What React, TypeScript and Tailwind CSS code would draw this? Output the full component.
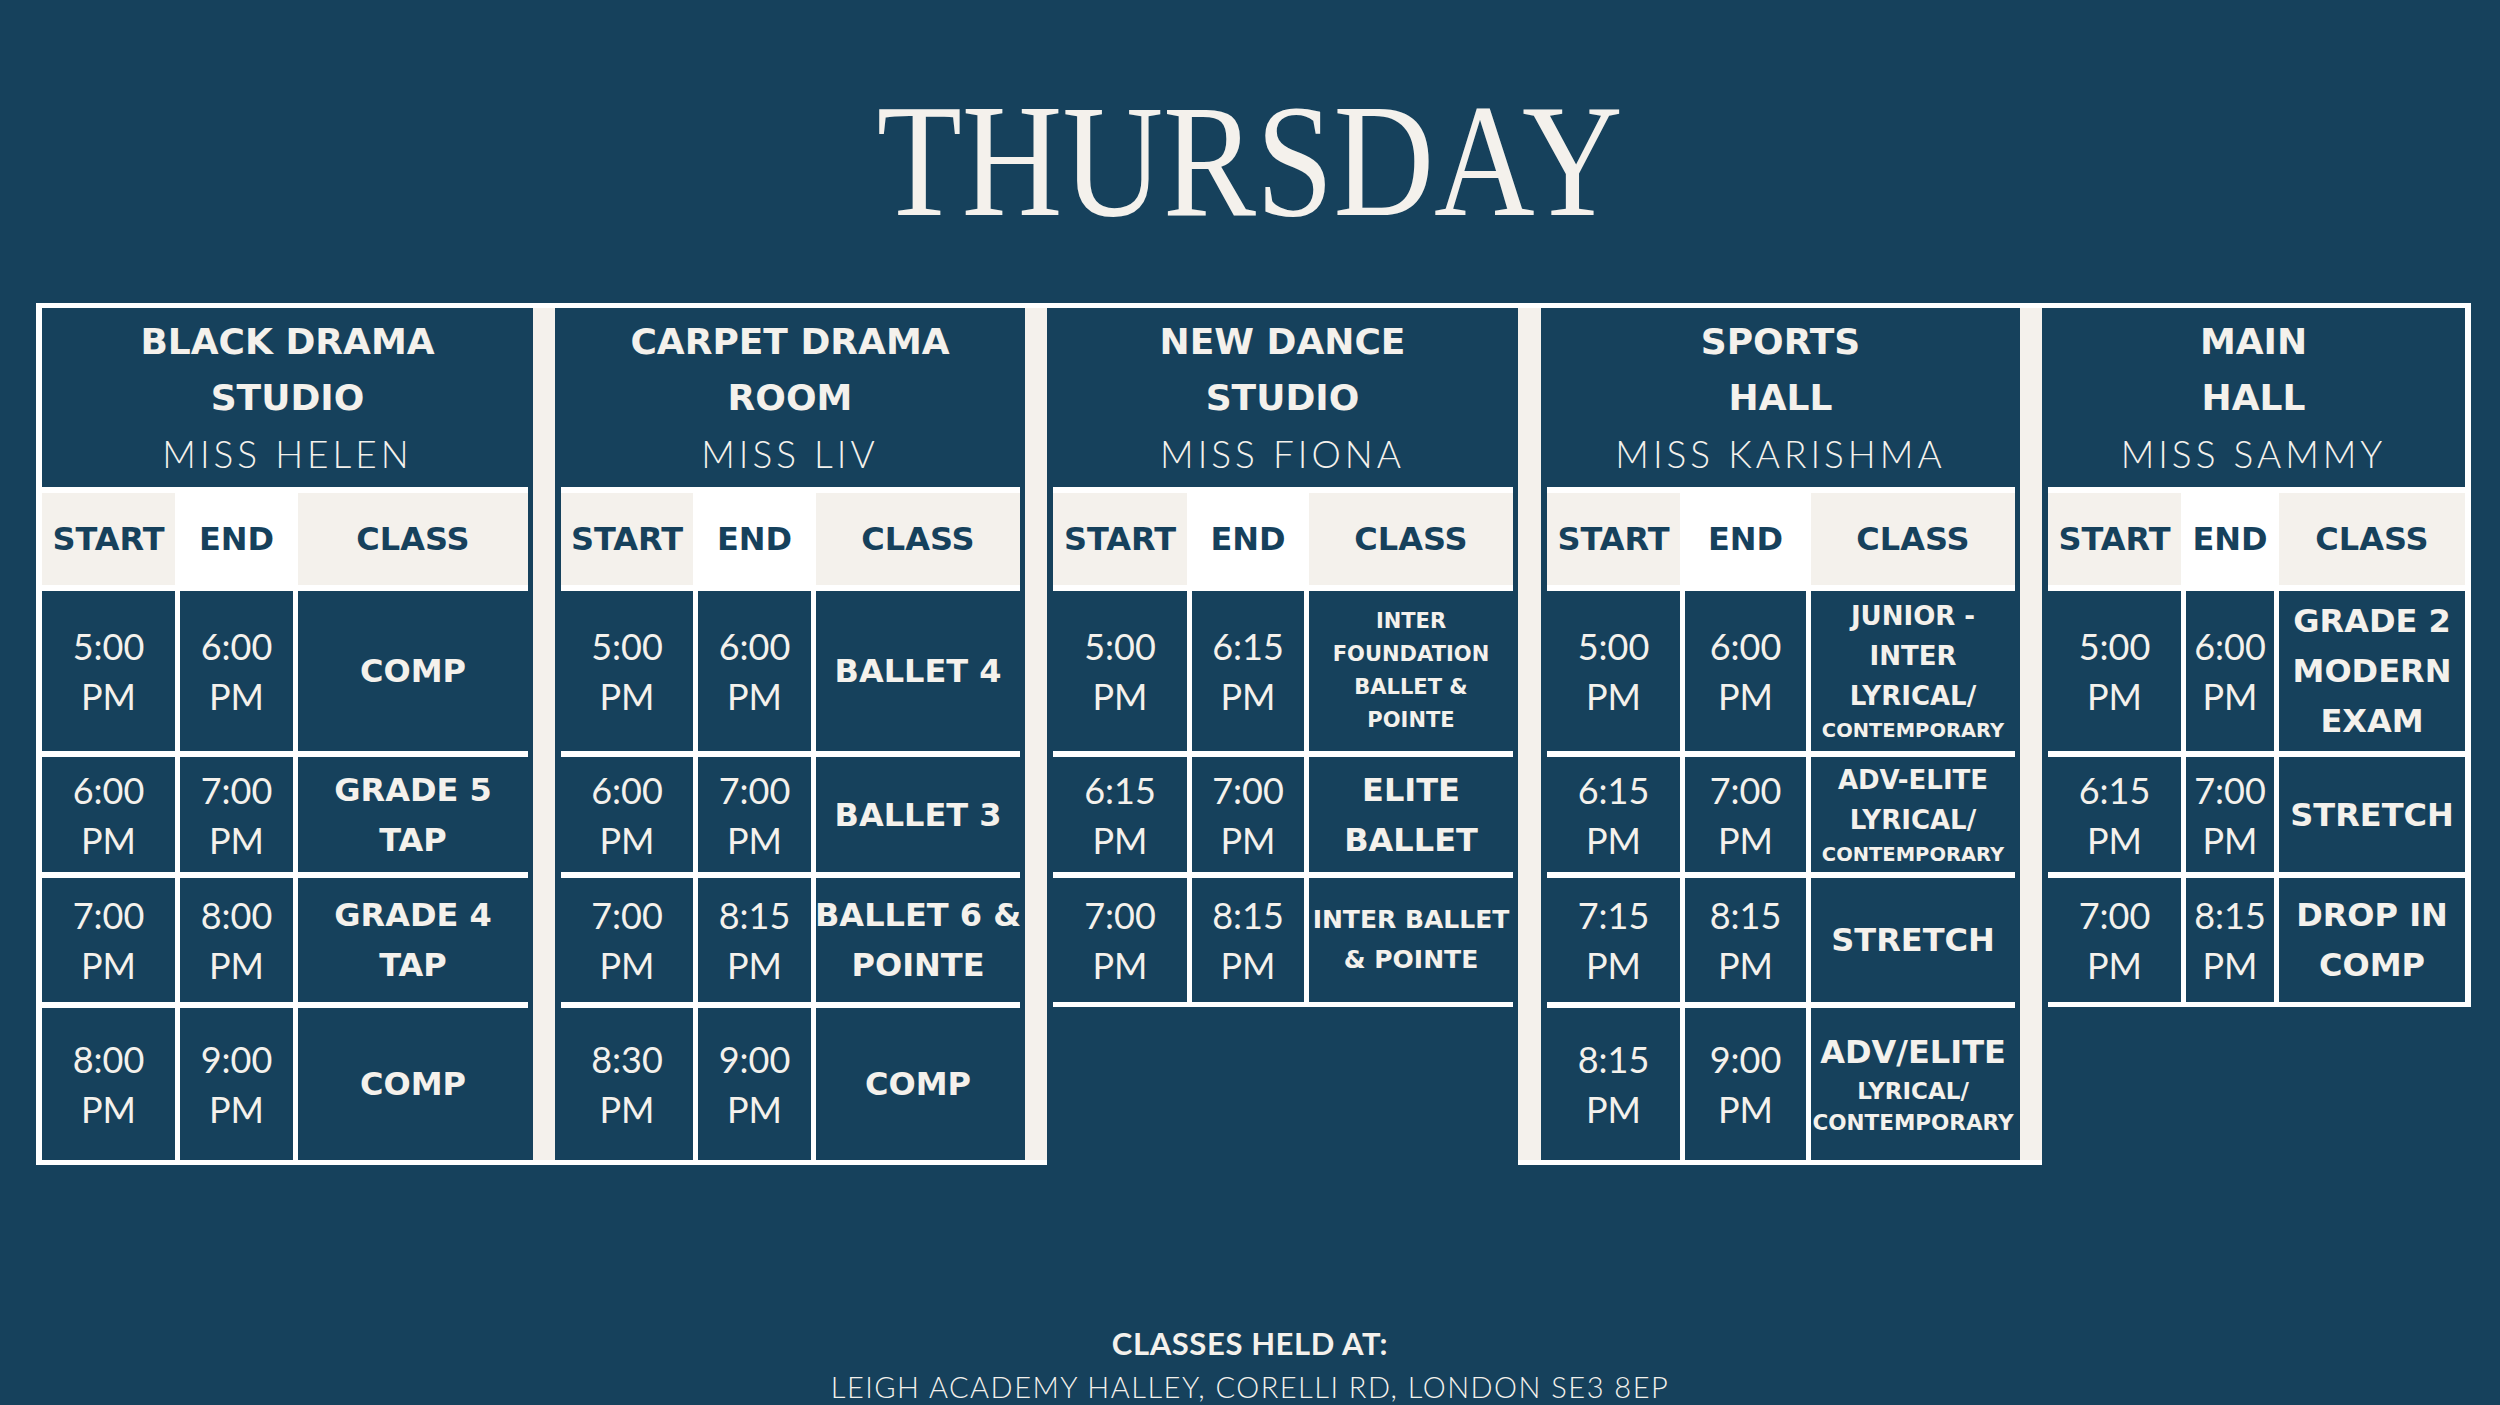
type Line = { t: string; c: string };
type Row = { start: string; end: string; lines: Line[] };
type Panel = {
  title: string[];
  teacher: string;
  box: string;
  pad: string;
  cols: string;
  rows: Row[];
};

const BIG = "text-[32px] leading-[50px]";
const MID = "text-[26px] leading-[40px]";
const SMALL = "text-[19.5px] leading-[30px]";

const big = (...t: string[]): Line[] => t.map((x) => ({ t: x, c: BIG }));

const panels: Panel[] = [
  {
    title: ["BLACK DRAMA", "STUDIO"],
    teacher: "MISS HELEN",
    box: "w-[491px]",
    pad: "pr-[5px]",
    cols: "grid-cols-[133px_113px_230px]",
    rows: [
      { start: "5:00", end: "6:00", lines: big("COMP") },
      { start: "6:00", end: "7:00", lines: big("GRADE 5", "TAP") },
      { start: "7:00", end: "8:00", lines: big("GRADE 4", "TAP") },
      { start: "8:00", end: "9:00", lines: big("COMP") },
    ],
  },
  {
    title: ["CARPET DRAMA", "ROOM"],
    teacher: "MISS LIV",
    box: "w-[470px]",
    pad: "pl-[6px] pr-[5px]",
    cols: "grid-cols-[132px_113px_204px]",
    rows: [
      { start: "5:00", end: "6:00", lines: big("BALLET 4") },
      { start: "6:00", end: "7:00", lines: big("BALLET 3") },
      { start: "7:00", end: "8:15", lines: big("BALLET 6 &", "POINTE") },
      { start: "8:30", end: "9:00", lines: big("COMP") },
    ],
  },
  {
    title: ["NEW DANCE", "STUDIO"],
    teacher: "MISS FIONA",
    box: "w-[471px]",
    pad: "pl-[6px] pr-[5px]",
    cols: "grid-cols-[134px_112px_204px]",
    rows: [
      {
        start: "5:00",
        end: "6:15",
        lines: ["INTER", "FOUNDATION", "BALLET &", "POINTE"].map((t) => ({
          t,
          c: "text-[21px] leading-[33px]",
        })),
      },
      { start: "6:15", end: "7:00", lines: big("ELITE", "BALLET") },
      {
        start: "7:00",
        end: "8:15",
        lines: ["INTER BALLET", "& POINTE"].map((t) => ({ t, c: "text-[25px] leading-[40px]" })),
      },
    ],
  },
  {
    title: ["SPORTS", "HALL"],
    teacher: "MISS KARISHMA",
    box: "w-[479px]",
    pad: "pl-[6px] pr-[5px]",
    cols: "grid-cols-[133px_121px_204px]",
    rows: [
      {
        start: "5:00",
        end: "6:00",
        lines: [
          { t: "JUNIOR -", c: MID },
          { t: "INTER", c: MID },
          { t: "LYRICAL/", c: MID },
          { t: "CONTEMPORARY", c: SMALL },
        ],
      },
      {
        start: "6:15",
        end: "7:00",
        lines: [
          { t: "ADV-ELITE", c: MID },
          { t: "LYRICAL/", c: MID },
          { t: "CONTEMPORARY", c: SMALL },
        ],
      },
      { start: "7:15", end: "8:15", lines: big("STRETCH") },
      {
        start: "8:15",
        end: "9:00",
        lines: [
          { t: "ADV/ELITE", c: "text-[32px] leading-[44px]" },
          { t: "LYRICAL/", c: "text-[23px] leading-[34px]" },
          { t: "CONTEMPORARY", c: "text-[21.5px] leading-[30px]" },
        ],
      },
    ],
  },
  {
    title: ["MAIN", "HALL"],
    teacher: "MISS SAMMY",
    box: "w-[423px]",
    pad: "pl-[6px]",
    cols: "grid-cols-[133px_88px_186px]",
    rows: [
      { start: "5:00", end: "6:00", lines: big("GRADE 2", "MODERN", "EXAM") },
      { start: "6:15", end: "7:00", lines: big("STRETCH") },
      { start: "7:00", end: "8:15", lines: big("DROP IN", "COMP") },
    ],
  },
];

function Time({ v }: { v: string }) {
  return (
    <div className="bg-[#16415c] flex flex-col items-center justify-center font-['Lato'] text-[36px] leading-[50px] text-[#f4f1ec]">
      <span>{v}</span>
      <span>PM</span>
    </div>
  );
}

function Strip() {
  return <div className="w-[22px] shrink-0 bg-[#f4f1ec]" />;
}

function SchedulePanel({ p }: { p: Panel }) {
  const four = p.rows.length === 4;
  return (
    <div className={`${p.box} shrink-0 flex flex-col bg-[#16415c]`}>
      <div className="h-[179px] flex flex-col items-center justify-center text-[#f4f1ec]">
        {p.title.map((t) => (
          <div key={t} className="font-['DejaVu_Sans'] font-bold text-[36px] leading-[56px]">
            {t}
          </div>
        ))}
        <div className="font-['Lato'] font-light text-[37px] leading-[56px] tracking-[4px]">
          {p.teacher}
        </div>
      </div>
      <div className={p.pad}>
        <div
          className={`bg-white pt-[6px] grid ${p.cols} gap-x-[5px] gap-y-[6px] ${
            four
              ? "grid-rows-[92px_160px_115px_124px_152px]"
              : "grid-rows-[92px_160px_115px_124px] pb-[5px]"
          }`}>
          <div className="bg-[#f4f1ec] flex items-center justify-center font-['DejaVu_Sans'] font-bold text-[32px] text-[#16415c]">
            START
          </div>
          <div className="bg-white flex items-center justify-center font-['DejaVu_Sans'] font-bold text-[32px] text-[#16415c]">
            END
          </div>
          <div className="bg-[#f4f1ec] flex items-center justify-center font-['DejaVu_Sans'] font-bold text-[32px] text-[#16415c]">
            CLASS
          </div>
          {p.rows.map((r, i) => (
            <div key={i} className="contents">
              <Time v={r.start} />
              <Time v={r.end} />
              <div className="bg-[#16415c] flex flex-col items-center justify-center text-center font-['DejaVu_Sans'] font-bold text-[#f4f1ec] whitespace-nowrap">
                {r.lines.map((l, j) => (
                  <span key={j} className={l.c}>
                    {l.t}
                  </span>
                ))}
              </div>
            </div>
          ))}
        </div>
      </div>
    </div>
  );
}

export default function App() {
  return (
    <div className="w-[2500px] h-[1405px] overflow-hidden bg-[#16415c] flex flex-col pt-[80px]">
      <h1 className="h-[162px] text-center font-['Liberation_Serif'] text-[162px] leading-[162px] text-[#f4f1ec]">
        <span className="inline-block scale-x-[0.86]">THURSDAY</span>
      </h1>

      <div className="mt-[61px] ml-[36px] w-[2435px] border-t-[5px] border-white flex items-start">
        <div className="flex border-l-[6px] border-b-[5px] border-white">
          <SchedulePanel p={panels[0]} />
          <Strip />
          <SchedulePanel p={panels[1]} />
          <Strip />
        </div>
        <SchedulePanel p={panels[2]} />
        <div className="flex border-b-[5px] border-white">
          <div className="w-[23px] shrink-0 bg-[#f4f1ec]" />
          <SchedulePanel p={panels[3]} />
          <Strip />
        </div>
        <div className="border-r-[6px] border-white">
          <SchedulePanel p={panels[4]} />
        </div>
      </div>

      <div className="mt-[157px] flex flex-col items-center text-[#f4f1ec]">
        <div className="font-['Lato'] font-bold text-[31px] leading-[43px] tracking-[0.6px]">
          CLASSES HELD AT:
        </div>
        <div className="font-['Lato'] font-light text-[29px] leading-[43px] tracking-[1.5px]">
          LEIGH ACADEMY HALLEY, CORELLI RD, LONDON SE3 8EP
        </div>
      </div>
    </div>
  );
}
